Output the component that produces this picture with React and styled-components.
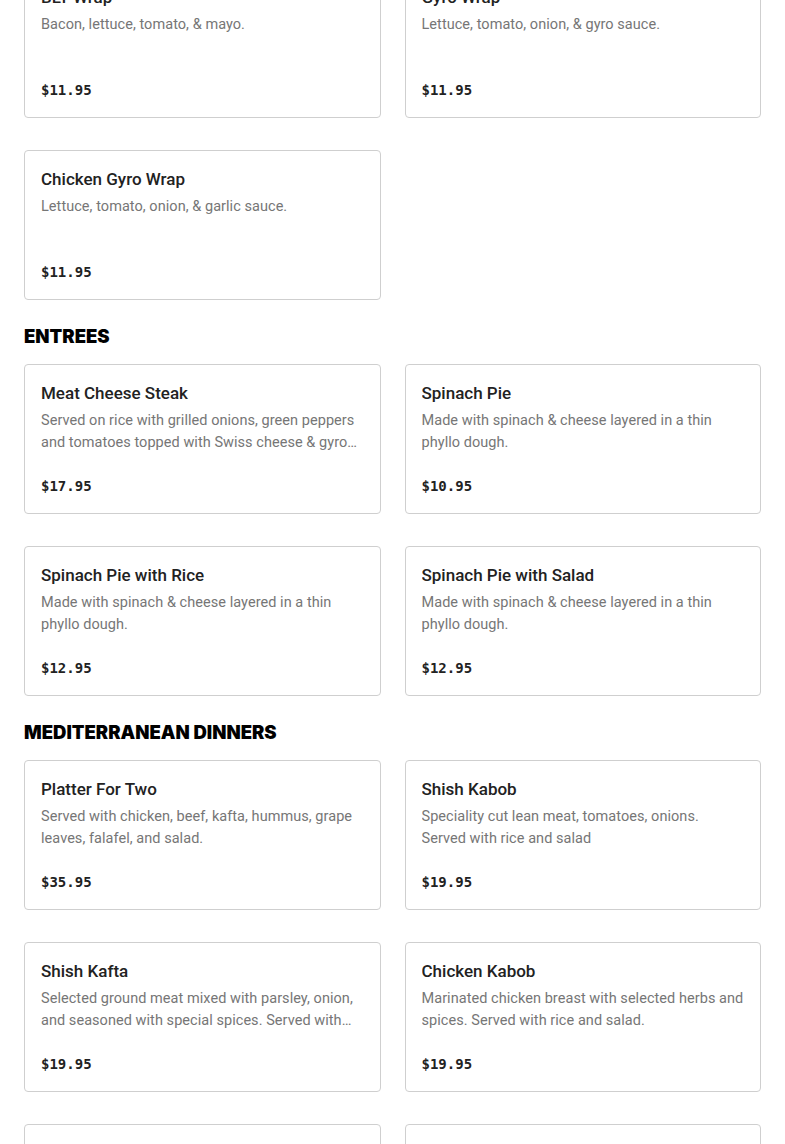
import React from "react";
import styled, { createGlobalStyle } from "styled-components";

const GlobalStyle = createGlobalStyle`
  * { box-sizing: border-box; }
  body {
    margin: 0;
    background: #fff;
    font-family: Roboto, "Liberation Sans", sans-serif;
    color: #222;
    overflow: hidden;
  }
`;

const Page = styled.main`
  padding: 0 24px;
  margin-top: -32px;
`;

const Section = styled.section`
  & + & {
    margin-top: 24px;
  }
`;

const SectionTitle = styled.h2`
  margin: 0 0 16px;
  font-family: Inter, "Liberation Sans", sans-serif;
  font-size: 18.5px;
  line-height: 24px;
  font-weight: 900;
  color: #000;
  text-transform: uppercase;
`;

const Grid = styled.div`
  display: grid;
  grid-template-columns: 1fr 1fr;
  column-gap: 24px;
  row-gap: 32px;
`;

const Card = styled.article`
  border: 1px solid #cfcfcf;
  border-radius: 4px;
  padding: 17px 16px 16px;
  height: 150px;
  display: flex;
  flex-direction: column;
  background: #fff;
`;

const ItemName = styled.h3`
  margin: 0;
  font-size: 17px;
  line-height: 22px;
  font-weight: 500;
  color: #222;
  white-space: nowrap;
  overflow: hidden;
  text-overflow: ellipsis;
`;

const ItemDesc = styled.p`
  margin: 6px 0 0;
  font-size: 14.5px;
  line-height: 22px;
  letter-spacing: 0.05px;
  color: #767676;
  min-height: 44px;
  display: -webkit-box;
  -webkit-line-clamp: 2;
  -webkit-box-orient: vertical;
  overflow: hidden;
`;

const Price = styled.span`
  margin-top: auto;
  font-family: "DejaVu Sans Mono", "Liberation Mono", monospace;
  font-size: 14px;
  line-height: 22px;
  font-weight: 700;
  color: #222;
`;

const menu = [
  {
    title: null,
    items: [
      { name: "BLT Wrap", desc: "Bacon, lettuce, tomato, & mayo.", price: "$11.95" },
      { name: "Gyro Wrap", desc: "Lettuce, tomato, onion, & gyro sauce.", price: "$11.95" },
      { name: "Chicken Gyro Wrap", desc: "Lettuce, tomato, onion, & garlic sauce.", price: "$11.95" },
    ],
  },
  {
    title: "Entrees",
    items: [
      {
        name: "Meat Cheese Steak",
        desc: "Served on rice with grilled onions, green peppers and tomatoes topped with Swiss cheese & gyro sauce.",
        price: "$17.95",
      },
      { name: "Spinach Pie", desc: "Made with spinach & cheese layered in a thin phyllo dough.", price: "$10.95" },
      { name: "Spinach Pie with Rice", desc: "Made with spinach & cheese layered in a thin phyllo dough.", price: "$12.95" },
      { name: "Spinach Pie with Salad", desc: "Made with spinach & cheese layered in a thin phyllo dough.", price: "$12.95" },
    ],
  },
  {
    title: "Mediterranean Dinners",
    items: [
      {
        name: "Platter For Two",
        desc: "Served with chicken, beef, kafta, hummus, grape leaves, falafel, and salad.",
        price: "$35.95",
      },
      {
        name: "Shish Kabob",
        desc: "Speciality cut lean meat, tomatoes, onions. Served with rice and salad",
        price: "$19.95",
      },
      {
        name: "Shish Kafta",
        desc: "Selected ground meat mixed with parsley, onion, and seasoned with special spices. Served with rice and salad.",
        price: "$19.95",
      },
      {
        name: "Chicken Kabob",
        desc: "Marinated chicken breast with selected herbs and spices. Served with rice and salad.",
        price: "$19.95",
      },
      { name: "Beef Shawarma", desc: "Thinly sliced marinated beef. Served with rice and salad.", price: "$19.95" },
      { name: "Chicken Shawarma", desc: "Thinly sliced marinated chicken. Served with rice and salad.", price: "$19.95" },
    ],
  },
];

const App = () => {
  return (
    <>
      <GlobalStyle />
      <Page>
        {menu.map((section, i) => (
          <Section key={i}>
            {section.title && <SectionTitle>{section.title}</SectionTitle>}
            <Grid>
              {section.items.map((item) => (
                <Card key={item.name}>
                  <ItemName>{item.name}</ItemName>
                  <ItemDesc>{item.desc}</ItemDesc>
                  <Price>{item.price}</Price>
                </Card>
              ))}
            </Grid>
          </Section>
        ))}
      </Page>
    </>
  );
};

export default App;
